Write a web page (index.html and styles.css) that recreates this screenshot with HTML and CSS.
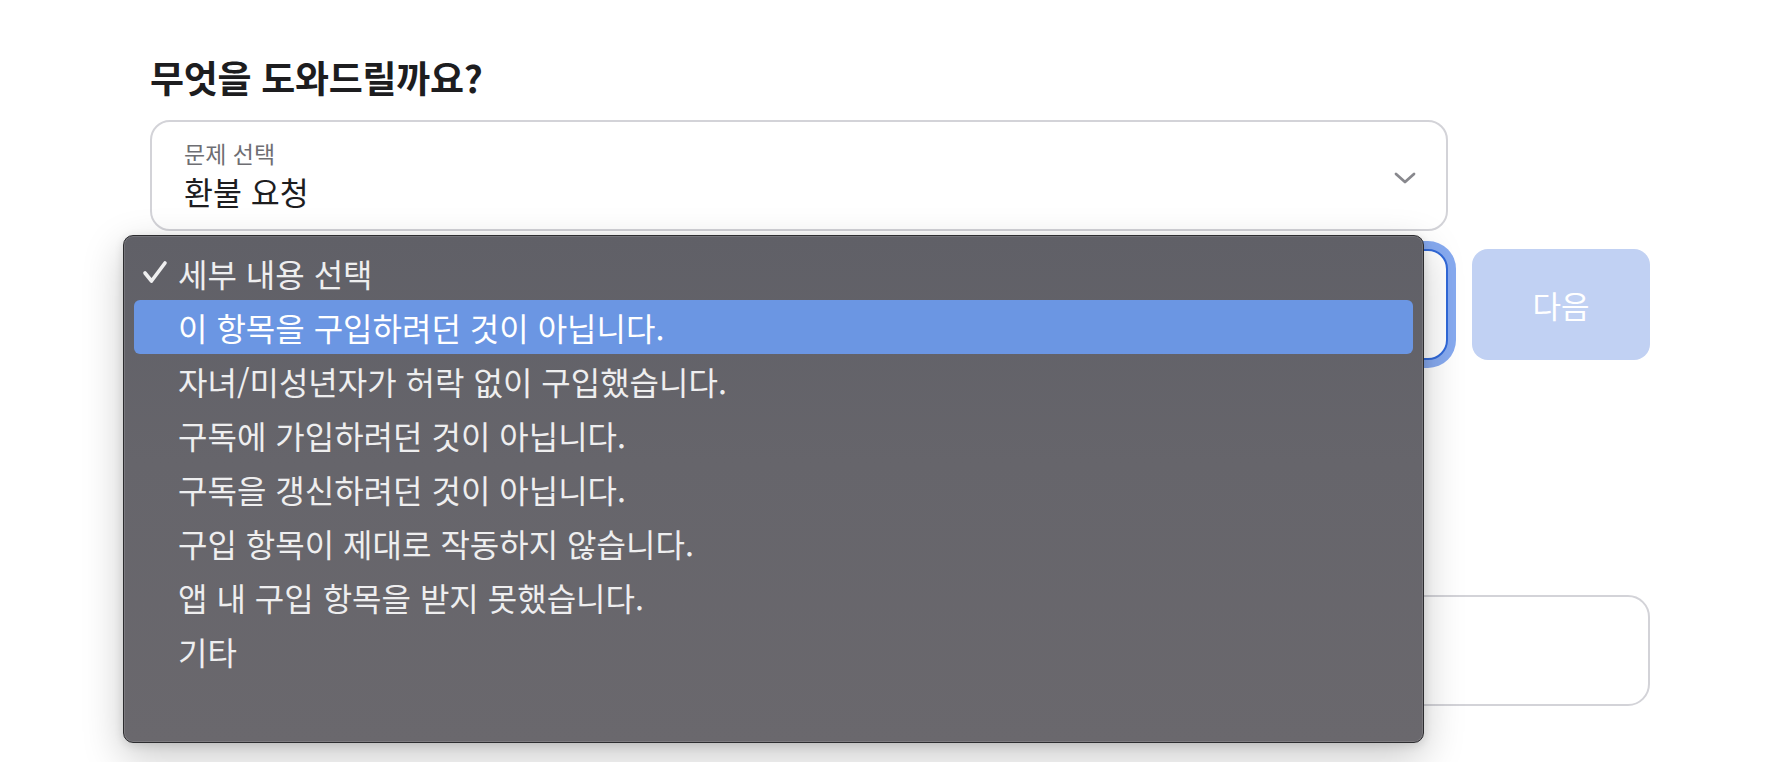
FILE: index.html
```html
<!DOCTYPE html>
<html lang="ko">
<head>
<meta charset="utf-8">
<title>무엇을 도와드릴까요?</title>
<link rel="stylesheet" href="styles.css">
</head>
<body>
<main class="page">
  <h1 class="title">무엇을 도와드릴까요?</h1>
  <div class="form">
    <div class="field field-first">
      <div class="field-text">
        <span class="field-label">문제 선택</span>
        <span class="field-value">환불 요청</span>
      </div>
      <svg class="chevron" width="22" height="12" viewBox="0 0 22 12" aria-hidden="true">
        <polyline points="2,2 11,10 20,2" fill="none" stroke="#88888d" stroke-width="2.8" stroke-linecap="round" stroke-linejoin="round"/>
      </svg>
    </div>
    <div class="select-wrap">
      <div class="field field-focused"></div>
      <ul class="menu">
        <li class="menu-item checked">
          <svg class="check" width="26" height="24" viewBox="0 0 26 24" aria-hidden="true">
            <polyline points="3,13 9.5,21 23,3" fill="none" stroke="#efeff0" stroke-width="3.6" stroke-linecap="round" stroke-linejoin="round"/>
          </svg>
          세부 내용 선택
        </li>
        <li class="menu-item active">이 항목을 구입하려던 것이 아닙니다.</li>
        <li class="menu-item">자녀/미성년자가 허락 없이 구입했습니다.</li>
        <li class="menu-item">구독에 가입하려던 것이 아닙니다.</li>
        <li class="menu-item">구독을 갱신하려던 것이 아닙니다.</li>
        <li class="menu-item">구입 항목이 제대로 작동하지 않습니다.</li>
        <li class="menu-item">앱 내 구입 항목을 받지 못했습니다.</li>
        <li class="menu-item">기타</li>
      </ul>
    </div>
    <button class="next" type="button">다음</button>
    <div class="textbox"></div>
  </div>
</main>
</body>
</html>
```
FILE: styles.css
```css
* { box-sizing: border-box; }

html, body {
  margin: 0;
  padding: 0;
  background: #ffffff;
}

body {
  font-family: "Noto Sans CJK KR", "Noto Sans", sans-serif;
  color: #1d1d1f;
}

.page {
  min-height: 100vh;
  padding: 55px 0 0 150px;
}

.title {
  margin: 0 0 21px;
  font-size: 37px;
  line-height: 44px;
  font-weight: 700;
  letter-spacing: -0.3px;
  color: #1d1d1f;
}

.form {
  display: grid;
  grid-template-columns: 1298px 178px;
  column-gap: 24px;
  row-gap: 18px;
}

.field {
  height: 111px;
  border: 2px solid #d3d3d8;
  border-radius: 20px;
  background: #ffffff;
  display: flex;
  align-items: center;
  justify-content: space-between;
  padding: 0 30px 0 32px;
}

.field-first {
  grid-column: 1;
}

.field-text {
  display: flex;
  flex-direction: column;
  gap: 5px;
  margin-top: -2px;
}

.field-label {
  font-size: 23px;
  line-height: 27px;
  color: #6e6e73;
}

.field-value {
  font-size: 31.5px;
  line-height: 38px;
  color: #1d1d1f;
}

.chevron {
  margin-top: 4px;
}

.select-wrap {
  grid-column: 1;
  position: relative;
}

.field-focused {
  border-color: #3169d9;
  box-shadow: 0 0 0 8px #87aaf0;
}

.next {
  grid-column: 2;
  height: 111px;
  border: 0;
  border-radius: 16px;
  background: #c1d1f3;
  color: #ffffff;
  font-family: "Noto Sans CJK KR", "Noto Sans", sans-serif;
  font-size: 31px;
  padding: 0;
}

.textbox {
  grid-column: 1 / -1;
  margin-top: 217px;
  height: 111px;
  border: 2px solid #d3d3d8;
  border-radius: 22px;
  background: #ffffff;
}

.menu {
  position: absolute;
  left: -27px;
  top: -14px;
  z-index: 10;
  width: 1301px;
  height: 508px;
  margin: 0;
  padding: 10px 10px;
  list-style: none;
  border: 1px solid #2c2c2f;
  border-radius: 10px;
  background: linear-gradient(180deg, #606067 0%, #66656b 45%, #6a686d 100%);
  box-shadow:
    inset 0 0 0 1px rgba(255, 255, 255, 0.13),
    0 14px 40px rgba(0, 0, 0, 0.22),
    0 2px 10px rgba(0, 0, 0, 0.12);
}

.menu-item {
  position: relative;
  height: 54px;
  display: flex;
  align-items: center;
  padding-left: 44px;
  font-size: 32px;
  line-height: 38px;
  color: #eeeeef;
  border-radius: 6px;
  white-space: nowrap;
}

.menu-item.active {
  background: #6b96e3;
  color: #ffffff;
}

.check {
  position: absolute;
  left: 8px;
  top: 14px;
}
```
